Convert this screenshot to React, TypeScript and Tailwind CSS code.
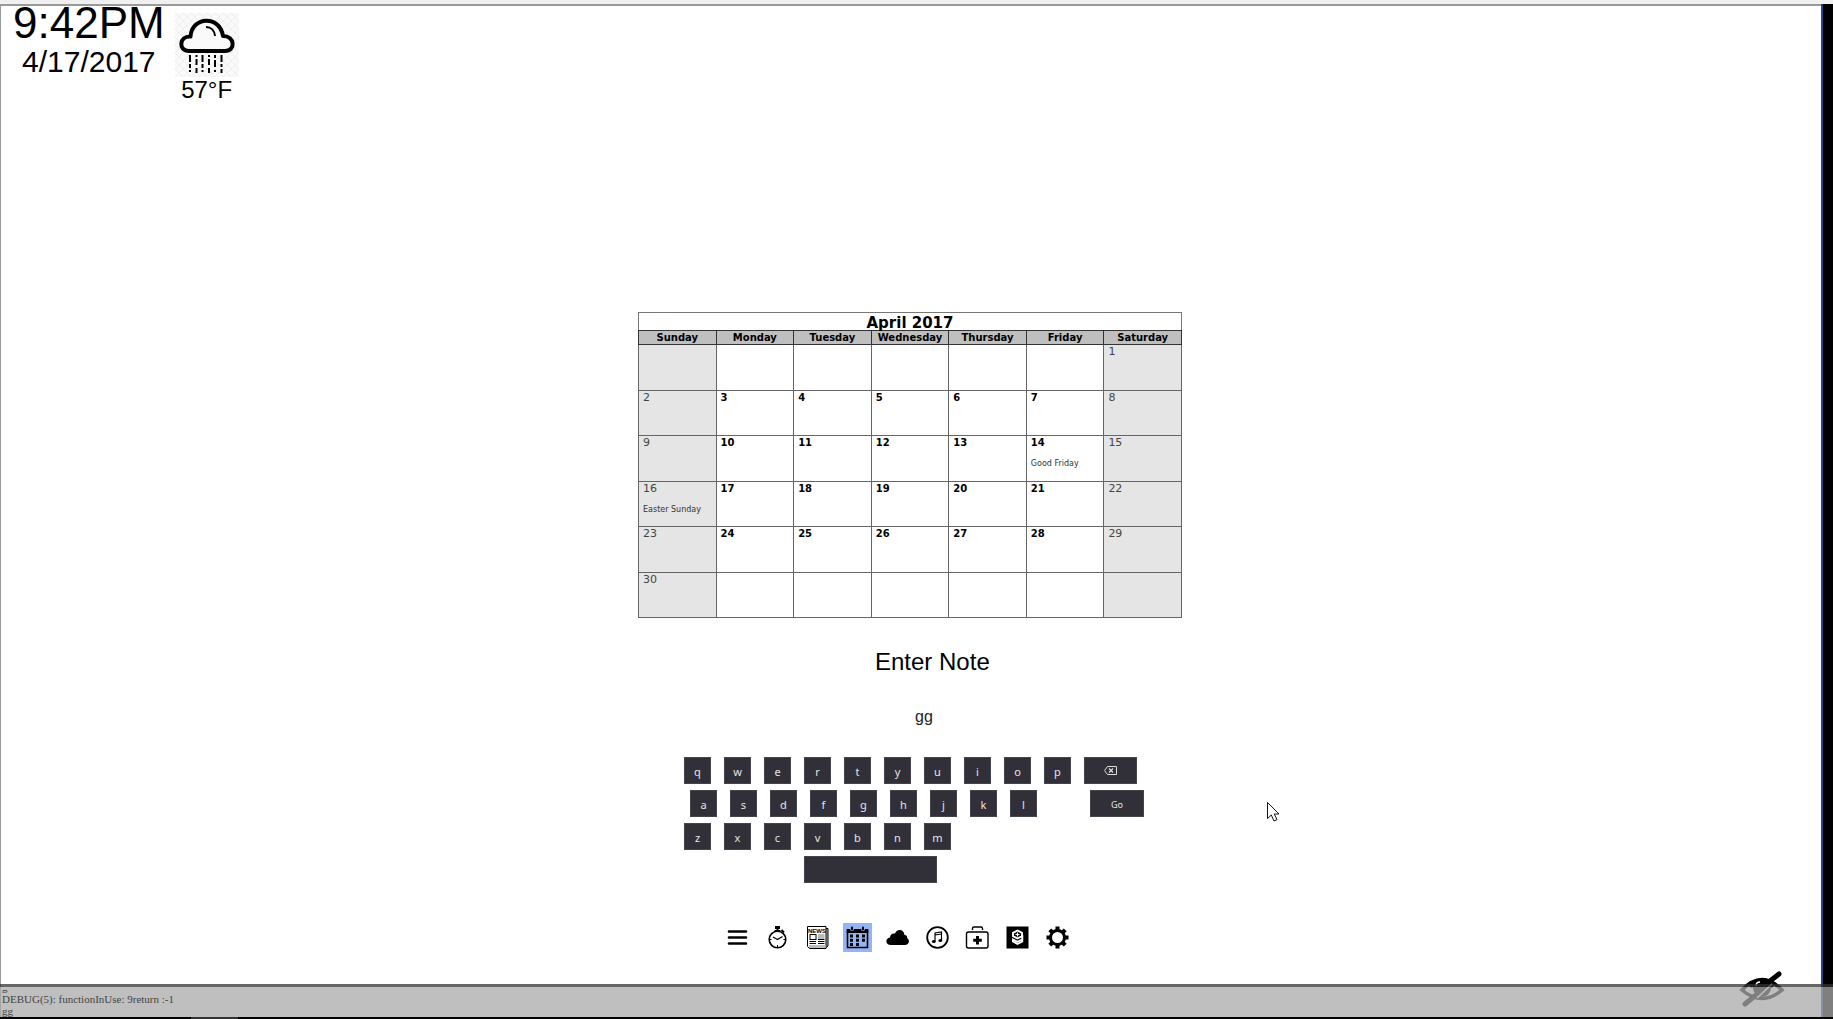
import type { ReactNode } from 'react';

const days = ['Sunday', 'Monday', 'Tuesday', 'Wednesday', 'Thursday', 'Friday', 'Saturday'];

const weeks: number[][] = [
  [0, 0, 0, 0, 0, 0, 1],
  [2, 3, 4, 5, 6, 7, 8],
  [9, 10, 11, 12, 13, 14, 15],
  [16, 17, 18, 19, 20, 21, 22],
  [23, 24, 25, 26, 27, 28, 29],
  [30, 0, 0, 0, 0, 0, 0],
];

const holidays: Record<number, string> = { 14: 'Good Friday', 16: 'Easter Sunday' };

function RainCloud() {
  return (
    <svg viewBox="0 0 64 64" className="size-16 bg-[#fafafa]" role="img" aria-label="Rain">
      <defs>
        <pattern id="lattice" width="8" height="8" patternUnits="userSpaceOnUse">
          <path d="M0 0L8 8M8 0L0 8" stroke="#ebebeb" strokeWidth="0.7" />
        </pattern>
      </defs>
      <rect width="64" height="64" fill="url(#lattice)" />
      <path
        d="M14 38 C3 38 4 23 15.500 23.500 C17 3 45 2 48 23 C60 23 61 38 50 38 Z"
        fill="#fafafa"
        stroke="#000"
        strokeWidth="4"
        strokeLinejoin="round"
      />
      <path d="M31 14 C36 14 39.500 17.500 40 23" fill="none" stroke="#000" strokeWidth="2" />
      <g stroke="#000" strokeWidth="2">
        <path d="M15 42V49M15 51V55M15 57V59" />
        <path d="M21.500 42V44M21.500 46V52M21.500 55V60" />
        <path d="M27.500 42V49M27.500 51V55M27.500 57V59" />
        <path d="M34 42V44M34 46V52M34 55V60" />
        <path d="M40 42V45M40 47V54M40 57V59" />
        <path d="M46.500 42V49M46.500 51V54M46.500 56V60" />
      </g>
    </svg>
  );
}

function Calendar() {
  return (
    <table className="w-[544px] table-fixed border-collapse border border-[#555] font-['DejaVu_Sans',sans-serif] text-black">
      <caption className="h-[18px] border border-b-0 border-[#777] pt-px text-center text-[15px] leading-[18px] font-bold">
        April 2017
      </caption>
      <thead>
        <tr className="h-[14px] bg-[#bfbfbf]">
          {days.map((d) => (
            <th key={d} scope="col" className="border border-[#333] p-0 text-center text-[10px] leading-[13px] font-bold">
              {d}
            </th>
          ))}
        </tr>
      </thead>
      <tbody>
        {weeks.map((week, w) => (
          <tr key={w} className="h-[45px] odd:h-[46px]">
            {week.map((n, i) => {
              const weekend = i === 0 || i === 6;
              return (
                <td
                  key={i}
                  className={
                    weekend
                      ? 'border border-[#666] bg-[#e5e5e5] px-1 py-0 align-top text-[11px] leading-[13px] text-[#444]'
                      : 'border border-[#666] px-1 py-0 align-top text-[10px] leading-[13px] font-bold'
                  }
                >
                  {n > 0 && <div>{n}</div>}
                  {holidays[n] && (
                    <div className="mt-2 text-[8px] leading-[14px] font-normal whitespace-nowrap text-[#333]">{holidays[n]}</div>
                  )}
                </td>
              );
            })}
          </tr>
        ))}
      </tbody>
    </table>
  );
}

function Key({ children, label, width = 'w-[27px]' }: { children?: ReactNode; label?: string; width?: string }) {
  return (
    <button
      type="button"
      aria-label={label}
      className={`${width} flex h-[27px] items-center justify-center border border-[#45434c] bg-[#312f38] pt-[2px] font-['Noto_Sans',sans-serif] text-[11px] leading-[14px] text-[#e6e6e6]`}
    >
      {children}
    </button>
  );
}

function Keyboard() {
  return (
    <div className="mt-[30px] ml-[46px] flex flex-col gap-[6px]">
      <div className="flex gap-[13px]">
        {'qwertyuiop'.split('').map((k) => (
          <Key key={k}>{k}</Key>
        ))}
        <Key label="Backspace" width="w-[53px]">
          <svg viewBox="0 0 13 9" className="mb-[2px] h-[9px] w-[13px]" fill="none" stroke="#ddd" strokeWidth="1">
            <path d="M3.500 0.500H12.500V8.500H3.500L0.500 4.500Z" />
            <path d="M5 2.500L9 6.500M9 2.500L5 6.500" strokeWidth="1.300" />
          </svg>
        </Key>
      </div>
      <div className="ml-[6px] flex gap-[13px]">
        {'asdfghjkl'.split('').map((k) => (
          <Key key={k}>{k}</Key>
        ))}
        <div className="w-[27px]" />
        <Key width="w-[54px]">
          <span className="text-[9px]">Go</span>
        </Key>
      </div>
      <div className="flex gap-[13px]">
        {'zxcvbnm'.split('').map((k) => (
          <Key key={k}>{k}</Key>
        ))}
      </div>
      <div className="ml-[120px] flex">
        <Key label="Space" width="w-[133px]" />
      </div>
    </div>
  );
}

const tools: { name: string; art: ReactNode }[] = [
  {
    name: 'Menu',
    art: <path d="M6 8.500H23M6 14.500H23M6 20.500H23" stroke="#000" strokeWidth="2.600" strokeLinecap="round" />,
  },
  {
    name: 'Timer',
    art: (
      <g stroke="#000" fill="none">
        <circle cx="14.500" cy="16.500" r="8.300" strokeWidth="1.600" />
        <path d="M12 4.500H17" strokeWidth="3" />
        <path d="M14.500 4V8M11.500 8H17.500" strokeWidth="2" />
        <path d="M18.500 7L21 9.500" strokeWidth="2" />
        <path d="M10 14L14.500 16.500L19.500 13.500" strokeWidth="1.300" />
        <path d="M14.500 22V24M7 16.500H8.500M20.500 16.500H22" />
      </g>
    ),
  },
  {
    name: 'News',
    art: (
      <g>
        <path d="M22.500 5.500H25V23L22.500 25" fill="#bbb" stroke="#000" />
        <path d="M4.500 3.500H23V25.500H6.500L4.500 23.500Z" fill="#fff" stroke="#000" />
        <rect x="6" y="22" width="16.500" height="3" fill="#bbb" />
        <rect x="15" y="11" width="6.500" height="5" fill="#bbb" />
        <rect x="7" y="11.500" width="6" height="5" fill="#fff" stroke="#000" />
        <path d="M6.500 18.500H13M6.500 20.500H13M15 18.500H21.500M15 20.500H21.500M15 16.500H21.500" stroke="#000" />
        <text x="14" y="9.500" textAnchor="middle" fontSize="6" fontWeight="bold" fontFamily="Liberation Sans, sans-serif">
          NEWS
        </text>
      </g>
    ),
  },
  {
    name: 'Calendar',
    art: (
      <g>
        <path d="M4.500 8H24.500V24.500H4.500Z" fill="none" stroke="#000" strokeWidth="1.600" />
        <path d="M3.700 6H25.300V10H3.700Z" />
        <path d="M9 4.500V6.500M20 4.500V6.500" stroke="#93b5f1" strokeWidth="3.600" strokeLinecap="round" />
        <path d="M9 4.500V6.500M20 4.500V6.500" stroke="#000" strokeWidth="2" strokeLinecap="round" />
        <path d="M7 11.500h3v3h-3zM13 11.500h3v3h-3zM19 11.500h3v3h-3zM7 15.700h3v3h-3zM13 15.700h3v3h-3zM19 15.700h3v3h-3zM7 20h3v3h-3zM13 20h3v3h-3z" />
      </g>
    ),
  },
  {
    name: 'Weather',
    art: <path d="M8 22C2 22 2 15 7 14.500C7 11 10 10 12 10.500C14 5.500 21 6 21.500 12C24 12 24.500 14 24 15C27 16.500 26.500 22 22 22Z" />,
  },
  {
    name: 'Music',
    art: (
      <g>
        <circle cx="14.500" cy="14.500" r="10.300" fill="none" stroke="#000" strokeWidth="1.800" />
        <path d="M12 18.500V10L18.500 9V17.500M12 12L18.500 11" fill="none" stroke="#000" strokeWidth="1.200" />
        <ellipse cx="10.800" cy="18.500" rx="1.900" ry="1.500" />
        <ellipse cx="17.300" cy="17.500" rx="1.900" ry="1.500" />
      </g>
    ),
  },
  {
    name: 'Health',
    art: (
      <g>
        <rect x="3.500" y="9" width="21.500" height="16" rx="2" fill="none" stroke="#000" strokeWidth="1.400" />
        <path d="M9.500 7V5.500Q9.500 4 11 4H18Q19.500 4 19.500 5.500V7" fill="none" stroke="#000" strokeWidth="1.400" />
        <path d="M14.500 13V21.500M10.200 17.300H18.800" stroke="#000" strokeWidth="3" />
      </g>
    ),
  },
  {
    name: 'Finance',
    art: (
      <g>
        <path d="M3.500 3.500H25.500V25.500H3.500Z" />
        <path
          d="M19 11V9.800L14.500 7.500L10 9.800V13.200L14.500 15.500L19 13.200V11M19.300 12V18.500L14.500 21L10 18.500V16.500L14.500 18.800L19 16.500"
          fill="none"
          stroke="#fff"
          strokeWidth="1.900"
        />
        <path d="M12.500 11.500H16.500M14.500 9.500V13.500" stroke="#fff" strokeWidth="1.200" />
      </g>
    ),
  },
  {
    name: 'Settings',
    art: (
      <g fill="none" stroke="#000">
        <circle cx="14.500" cy="14.500" r="7" strokeWidth="3" />
        <path
          d="M14.500 3.500V7M14.500 22V25.500M3.500 14.500H7M22 14.500H25.500M6.800 6.800L9 9M20 20L22.200 22.200M22.200 6.800L20 9M9 20L6.800 22.200"
          strokeWidth="4"
        />
      </g>
    ),
  },
];

function Toolbar() {
  return (
    <nav aria-label="Functions" className="mt-10 ml-[85px] flex gap-[11px]">
      {tools.map((t) => (
        <button
          key={t.name}
          type="button"
          aria-label={t.name}
          className={t.name === 'Calendar' ? 'size-[29px] bg-[#93b5f1]' : 'size-[29px]'}
        >
          <svg viewBox="0 0 29 29" className="size-[29px]">
            {t.art}
          </svg>
        </button>
      ))}
    </nav>
  );
}

export default function App() {
  return (
    <div className="relative flex min-h-screen flex-col overflow-hidden bg-white font-['Liberation_Sans',Arial,sans-serif] text-black">
      <div className="h-[4px] bg-[#f0f0f0]" />
      <div className="flex flex-1">
        <div className="flex-1 border-t-2 border-l border-[#999]">
          <header className="flex h-[306px] items-start gap-[10px] pl-3">
            <div className="flex flex-col items-center">
              <time className="text-[44px] leading-[34px]">9:42PM</time>
              <time className="mt-1 text-[30px] leading-[36px]">4/17/2017</time>
            </div>
            <div className="flex flex-col items-center pt-[7px]">
              <RainCloud />
              <span className="text-[24px] leading-[26px]">57°F</span>
            </div>
          </header>
          <main className="mx-auto w-[546px]">
            <Calendar />
            <label htmlFor="note" className="mt-[30px] ml-[237px] block text-[24px] leading-[28px]">
              Enter Note
            </label>
            <input
              id="note"
              defaultValue="gg"
              className="mt-[31px] ml-[277px] block w-[160px] text-[16px] leading-[20px] text-[#222] outline-none"
            />
            <Keyboard />
            <Toolbar />
          </main>
        </div>
        <div className="w-3 border-l-2 border-[#22478a] bg-black" />
      </div>

      <button type="button" aria-label="Toggle visibility" className="absolute right-[48px] bottom-[11px]">
        <svg viewBox="0 0 46 38" className="h-[38px] w-[46px]">
          <path d="M3 20Q23 -1 43 20Q23 37 3 20Z" fill="#fff" stroke="#000" strokeWidth="3.500" />
          <path d="M9 15Q23 2 36 14L33 18Q23 12 12 18Z" />
          <circle cx="23" cy="18" r="9" />
          <path d="M17 16Q17 12 21 12" fill="none" stroke="#fff" strokeWidth="1.500" />
          <path d="M6 34L17 25M31 11L40 4" stroke="#000" strokeWidth="5" strokeLinecap="round" />
          <path d="M18 28L33 14" stroke="#fff" strokeWidth="1.500" />
        </svg>
      </button>

      <svg viewBox="0 0 13 20" className="absolute top-[802px] left-[1267px] h-5 w-[13px]" aria-hidden="true">
        <path d="M0.500 0.500V16.500L4.300 13L7 19L10 17.700L7.300 12H12Z" fill="#fff" stroke="#112" />
      </svg>

      <section
        aria-label="Debug output"
        className="absolute inset-x-0 bottom-0 flex h-[35px] flex-col border-t-[3px] border-[#333]/75 bg-[#aaa]/75 bg-clip-padding pt-[3px] text-[#444]"
      >
        <div className="flex min-h-0 flex-1 flex-col justify-end overflow-hidden pl-[2px] font-['Liberation_Serif',serif] text-[11px] leading-[12px]">
          <p className="shrink-0">g</p>
          <p className="shrink-0">DEBUG(5): functionInUse: 9return :-1</p>
          <p className="shrink-0">gg</p>
        </div>
        <div className="flex h-[2px] shrink-0 bg-black pl-[191px]">
          <div className="w-[47px] bg-[#333]" />
        </div>
      </section>
    </div>
  );
}
